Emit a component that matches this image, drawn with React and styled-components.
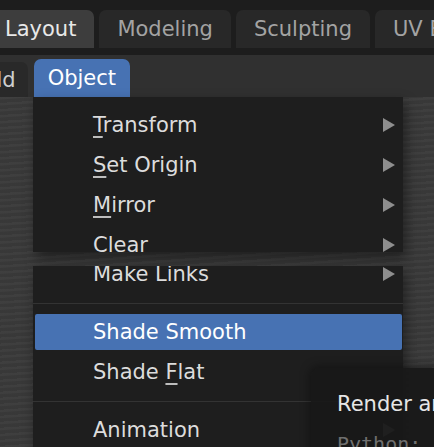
import styled, { createGlobalStyle } from "styled-components";

const GlobalStyle = createGlobalStyle`
  html, body {
    margin: 0;
    padding: 0;
    background: #3a3a3a;
  }
  body {
    font-family: "DejaVu Sans", "Liberation Sans", sans-serif;
  }
`;

const Screen = styled.div`
  width: 434px;
  height: 447px;
  overflow: hidden;
  display: flex;
  flex-direction: column;
  font-size: 21px;
`;

const TopBar = styled.div`
  height: 55px;
  flex: none;
  background: #1d1d1d;
  display: flex;
  align-items: flex-start;
  gap: 5px;
  padding-top: 10px;
  box-sizing: border-box;
  margin-left: -13px;
`;

const Tab = styled.div`
  height: 38px;
  padding: 0 18px;
  display: flex;
  align-items: center;
  border-radius: 7px 7px 0 0;
  white-space: nowrap;
  background: ${({ $active }) => ($active ? "#3d3d3d" : "#282828")};
  color: ${({ $active }) => ($active ? "#e8e8e8" : "#a3a3a3")};
`;

const Header = styled.div`
  height: 42px;
  flex: none;
  background: #303030;
  display: flex;
  align-items: flex-end;
  gap: 6px;
  margin-left: -37px;
`;

const HeaderButton = styled.div`
  height: ${({ $open }) => ($open ? "38px" : "35px")};
  padding: 0 ${({ $open }) => ($open ? "14px" : "12px")};
  display: flex;
  align-items: center;
  border-radius: 7px 7px 0 0;
  background: ${({ $open }) => ($open ? "#4772b3" : "#292929")};
  color: ${({ $open }) => ($open ? "#ffffff" : "#cfcfcf")};
`;

const Viewport = styled.div`
  flex: 1;
  position: relative;
  background:
    repeating-linear-gradient(
      176deg,
      rgba(255, 255, 255, 0.025) 0px,
      rgba(255, 255, 255, 0.025) 2px,
      rgba(0, 0, 0, 0.03) 3px,
      rgba(0, 0, 0, 0.03) 6px
    ),
    #3a3a3a;
`;

const Menu = styled.div`
  position: absolute;
  left: 33px;
  width: 370px;
  top: ${({ $top }) => $top}px;
  height: ${({ $height }) => $height}px;
  background: #1e1e1e;
  overflow: hidden;
  box-shadow: 3px 6px 12px rgba(0, 0, 0, 0.45);
  color: #dcdcdc;
`;

const MenuList = styled.div`
  display: flex;
  flex-direction: column;
  margin-top: ${({ $offset }) => $offset}px;
`;

const Row = styled.div`
  height: ${({ $hot }) => ($hot ? "36px" : "40px")};
  margin: ${({ $hot }) => ($hot ? "2px 1px 2px 2px" : "0")};
  padding: 0 8px 0 ${({ $hot }) => ($hot ? "58px" : "60px")};
  display: flex;
  align-items: center;
  justify-content: space-between;
  background: ${({ $hot }) => ($hot ? "#4772b3" : "transparent")};
  color: ${({ $hot }) => ($hot ? "#ffffff" : "#dcdcdc")};
  border-radius: 2px;
  white-space: nowrap;
`;

const Key = styled.span`
  text-decoration: underline;
  text-decoration-thickness: 1.5px;
  text-underline-offset: 4px;
  text-decoration-color: #bdbdbd;
`;

const Arrow = styled.span`
  width: 0;
  height: 0;
  border-top: 7px solid transparent;
  border-bottom: 7px solid transparent;
  border-left: 12px solid #8e8e8e;
`;

const Separator = styled.div`
  height: 18px;
  display: flex;
  align-items: center;

  &::after {
    content: "";
    flex: 1;
    height: 1px;
    background: #333333;
  }
`;

const Tooltip = styled.div`
  position: absolute;
  left: 311px;
  top: 271px;
  width: 160px;
  height: 120px;
  border-radius: 9px 0 0 0;
  background: rgba(24, 24, 24, 0.94);
  box-shadow: -2px -2px 10px rgba(0, 0, 0, 0.35);
  padding: 16px 0 0 26px;
  box-sizing: border-box;
  display: flex;
  flex-direction: column;
`;

const TipLine = styled.div`
  height: 40px;
  display: flex;
  align-items: center;
  white-space: nowrap;
  color: ${({ $dim }) => ($dim ? "#6f6f6f" : "#e6e6e6")};
  font-family: ${({ $dim }) =>
    $dim ? '"DejaVu Sans Mono", "Liberation Mono", monospace' : "inherit"};
  font-size: ${({ $dim }) => ($dim ? "20px" : "21px")};
`;

const Label = ({ text, k }) => {
  if (k === undefined) return <span>{text}</span>;
  return (
    <span>
      {text.slice(0, k)}
      <Key>{text[k]}</Key>
      {text.slice(k + 1)}
    </span>
  );
};

const upper = [
  { text: "Transform", k: 0 },
  { text: "Set Origin", k: 0 },
  { text: "Mirror", k: 0 },
  { text: "Clear" },
];

export default function App() {
  return (
    <>
      <GlobalStyle />
      <Screen>
        <TopBar>
          <Tab $active>Layout</Tab>
          <Tab>Modeling</Tab>
          <Tab>Sculpting</Tab>
          <Tab>UV Editing</Tab>
        </TopBar>
        <Header>
          <HeaderButton>Add</HeaderButton>
          <HeaderButton $open>Object</HeaderButton>
        </Header>
        <Viewport>
          <Menu $top={0} $height={155}>
            <MenuList $offset={8}>
              {upper.map((item) => (
                <Row key={item.text}>
                  <Label text={item.text} k={item.k} />
                  <Arrow />
                </Row>
              ))}
            </MenuList>
          </Menu>

          <Menu $top={169} $height={200}>
            <MenuList $offset={-12}>
              <Row>
                <Label text="Make Links" />
                <Arrow />
              </Row>
              <Separator />
              <Row $hot>
                <Label text="Shade Smooth" />
              </Row>
              <Row>
                <Label text="Shade Flat" k={6} />
              </Row>
              <Separator />
              <Row>
                <Label text="Animation" />
                <Arrow />
              </Row>
            </MenuList>
          </Menu>

          <Tooltip>
            <TipLine>Render animation</TipLine>
            <TipLine $dim>Python: bpy.ops</TipLine>
          </Tooltip>
        </Viewport>
      </Screen>
    </>
  );
}
